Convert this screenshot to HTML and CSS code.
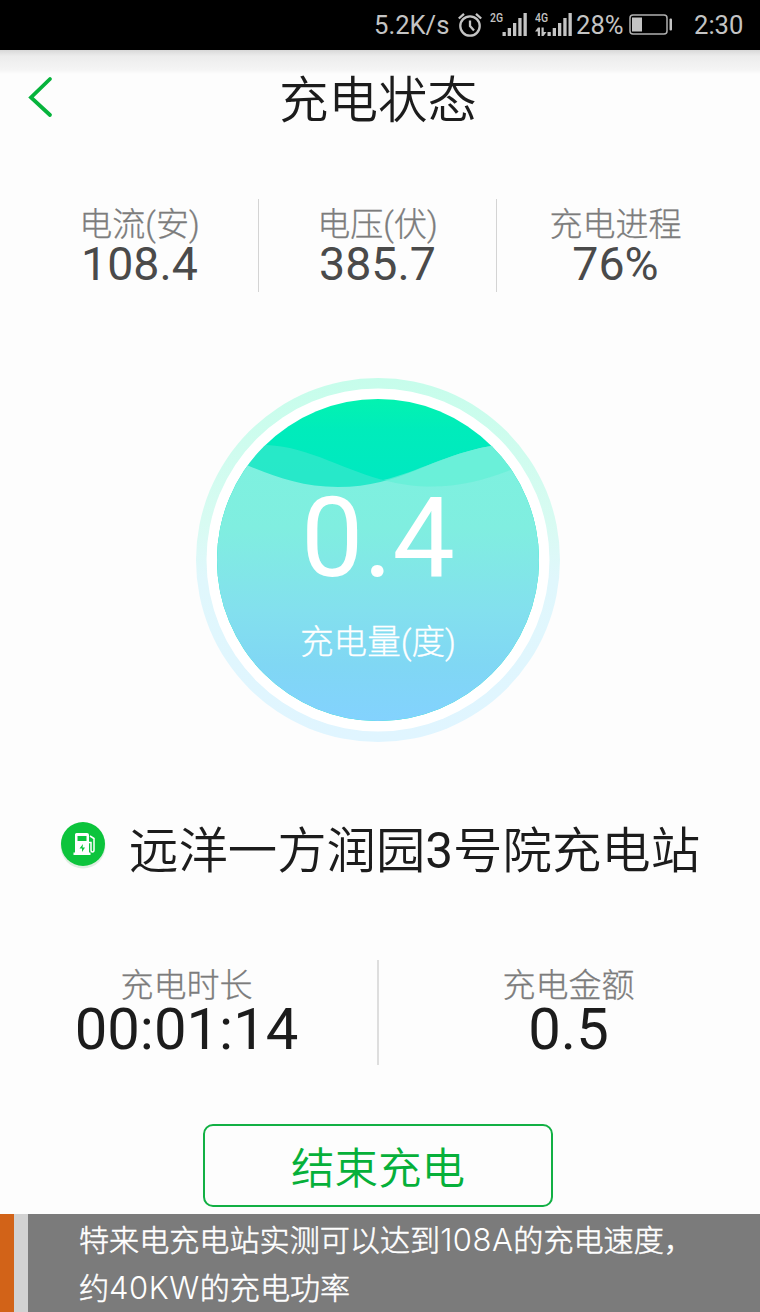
FILE: index.html
```html
<!DOCTYPE html>
<html lang="zh-CN">
<head>
  <meta charset="utf-8">
  <title>充电状态</title>
  <link rel="stylesheet" href="styles.css">
</head>
<body>
  <div class="status-bar">
    <span class="speed">5.2K/s</span>
    <svg class="alarm" width="24" height="26" viewBox="0 0 24 26" fill="none" stroke="#c4c4c4" stroke-width="2.300">
      <circle cx="12" cy="14" r="9.700"/>
      <path d="M12 8.500V14l4 4.500M.8 6.500L6 1.800M18 1.800L23.200 6.500"/>
    </svg>
    <svg class="signal" width="38" height="32" viewBox="0 -3 38 32" fill="#c4c4c4">
      <text class="net" x="0" y="10" textLength="13" lengthAdjust="spacingAndGlyphs">2G</text>
      <path d="M12.500 20h3.300v4h-3.300zM17.700 16H21v8h-3.300zM23 11h3.300v13H23zM28.300 6h3.300v18h-3.300zM33.500 1h3.300v23h-3.300z"/>
    </svg>
    <svg class="signal" width="38" height="32" viewBox="0 -3 38 32" fill="#c4c4c4">
      <text class="net" x="0" y="10" textLength="13" lengthAdjust="spacingAndGlyphs">4G</text>
      <path d="M0 19.500l3-4h2V24H2.800v-4.500zM6.500 15.500h2.200V20h2.800l-3 4h-2z"/>
      <path d="M12.500 20h3.300v4h-3.300zM17.700 16H21v8h-3.300zM23 11h3.300v13H23zM28.300 6h3.300v18h-3.300zM33.500 1h3.300v23h-3.300z"/>
    </svg>
    <span class="percent">28%</span>
    <svg class="battery" width="44" height="22" viewBox="0 0 44 22">
      <rect x="1" y="1" width="37" height="19" rx="3" fill="none" stroke="#b0b0b0" stroke-width="1.500"/>
      <rect x="3" y="3.500" width="10" height="14" fill="#c4c4c4"/>
      <rect x="40.500" y="4.500" width="2.500" height="12" rx="1" fill="#c4c4c4"/>
    </svg>
    <span class="clock">2:30</span>
  </div>

  <header class="header">
    <a class="back" href="#">
      <svg width="28" height="44" viewBox="0 0 28 44" fill="none" stroke="#06b33c" stroke-width="3.800" stroke-linecap="round">
        <path d="M24 4L5 22.500L24 40"/>
      </svg>
    </a>
    <h1>充电状态</h1>
  </header>

  <main>
    <div class="stats">
      <div class="stat">
        <div class="label">电流(安)</div>
        <div class="value">108.4</div>
      </div>
      <div class="stat">
        <div class="label">电压(伏)</div>
        <div class="value">385.7</div>
      </div>
      <div class="stat">
        <div class="label">充电进程</div>
        <div class="value">76%</div>
      </div>
    </div>

    <div class="gauge">
      <svg width="364" height="364" viewBox="0 0 364 364">
        <defs>
          <linearGradient id="ring" x1="0" y1="0" x2="0" y2="1">
            <stop offset="0" stop-color="#c6fdeb"/>
            <stop offset="0.400" stop-color="#d8fbf2"/>
            <stop offset="0.550" stop-color="#e0f7fc"/>
            <stop offset="1" stop-color="#e0f5ff"/>
          </linearGradient>
          <linearGradient id="top" gradientUnits="userSpaceOnUse" x1="0" y1="20" x2="0" y2="110">
            <stop offset="0" stop-color="#03f3b0"/>
            <stop offset="0.350" stop-color="#00ecbb"/>
            <stop offset="1" stop-color="#00e8c2"/>
          </linearGradient>
          <linearGradient id="water" gradientUnits="userSpaceOnUse" x1="0" y1="68" x2="0" y2="342">
            <stop offset="0" stop-color="#7df2df"/>
            <stop offset="0.300" stop-color="#80eee0"/>
            <stop offset="0.600" stop-color="#83e0ee"/>
            <stop offset="0.800" stop-color="#80d7f4"/>
            <stop offset="1" stop-color="#83d2fe"/>
          </linearGradient>
          <clipPath id="disc"><circle cx="182" cy="182" r="161"/></clipPath>
        </defs>
        <circle cx="182" cy="182" r="182" fill="url(#ring)"/>
        <circle cx="182" cy="182" r="171.500" fill="#fff"/>
        <g clip-path="url(#disc)">
          <rect width="364" height="364" fill="url(#top)"/>
          <!-- back wave, then front wave -->
          <path d="M0 62C30 64 50 66 71 67C115 69 150 94 192 103C235 113 275 107 320 92L364 80V364H0Z" fill="#4ee8d2" fill-opacity="0.500"/>
          <path d="M0 60C25 70 35 80 53 88C80 99 107 109 142 109C206 109 235 78 295 68C315 64 340 62 364 62V364H0Z" fill="url(#water)"/>
          <path d="M187 102C235 115 275 107 312 93L330 85V50L295 68C250 76 222 94 187 102Z" fill="#62f0d5" fill-opacity="0.700"/>
        </g>
      </svg>
      <div class="gauge-text">
        <div class="amount">0.4</div>
        <div class="unit">充电量(度)</div>
      </div>
    </div>

    <div class="station">
      <svg class="pump" width="54" height="54" viewBox="0 0 54 54">
        <circle cx="27" cy="28" r="22.500" fill="#dfeee2"/>
        <circle cx="27" cy="26" r="22" fill="#0cc43c"/>
        <path fill="#fff" fill-rule="evenodd" d="M20.500 15H31q2 0 2 2v17.500h1.500V37H17.500v-2.500H19V16.500Q19 15 20.500 15zM21.500 18v5h9v-5zM27 26l-3.500 4.500H26V34l3-4.500h-2.500z"/>
        <path d="M34 18l4 2.500V32q0 2-1.500 2T35 32v-7.500h-2" fill="none" stroke="#fff" stroke-width="1.500"/>
      </svg>
      <span class="station-name">远洋一方润园<span class="num">3</span>号院充电站</span>
    </div>

    <div class="totals">
      <div class="total">
        <div class="label">充电时长</div>
        <div class="value">00:01:14</div>
      </div>
      <div class="total">
        <div class="label">充电金额</div>
        <div class="value">0.5</div>
      </div>
    </div>

    <button class="stop">结束充电</button>
  </main>

  <footer class="caption">
    <p>特来电充电站实测可以达到<span class="latin">108A</span>的充电速度，<br>约<span class="latin">40KW</span>的充电功率</p>
  </footer>
</body>
</html>
```
FILE: styles.css
```css
* {
  box-sizing: border-box;
}

body {
  margin: 0;
  width: 760px;
  height: 1312px;
  overflow: hidden;
  display: flex;
  flex-direction: column;
  background-color: #fdfdfd;
  font-family: Roboto, "Noto Sans CJK SC", sans-serif;
  color: #1c1c1c;
}

.status-bar {
  display: flex;
  align-items: center;
  height: 50px;
  padding-left: 374px;
  background-color: #000;
  color: #c4c4c4;
  font-size: 25.600px;
  white-space: nowrap;
}

.speed {
  width: 84px;
}

.alarm {
  margin-right: 8px;
}

.signal {
  margin-right: 7px;
}

.net {
  font-size: 13.500px;
  font-weight: 500;
}

.percent {
  width: 53px;
  margin-left: -4px;
}

.clock {
  margin-left: 21px;
}

.header {
  display: flex;
  height: 96px;
  padding: 0 26px;
  background: linear-gradient(#d8d8d8, #ececec 6px, #f5f5f5 20px, #fdfdfd 24px);
}

.back {
  width: 28px;
  padding-top: 25px;
}

h1 {
  flex: 1;
  margin: 2px 32px 0 0;
  font-size: 49.500px;
  line-height: 98px;
  font-weight: 350;
  text-align: center;
}

main {
  display: flex;
  flex-direction: column;
  align-items: center;
  height: 1068px;
}

.stats {
  display: flex;
  width: 713px;
  height: 93px;
  margin: 53px 0 0 -5px;
  text-align: center;
}

.stat {
  flex: 1;
  border-right: 1px solid #d4d4d4;
}

.stat:last-child {
  border-right: 0;
}

.label {
  padding-top: 3px;
  font-size: 33px;
  line-height: 45px;
  font-weight: 300;
  color: #7c7c7c;
  -webkit-text-stroke: 0.3px;
}

.stat .value {
  font-size: 46.500px;
  line-height: 35px;
  color: #4a4a4a;
}

.gauge {
  display: grid;
  width: 364px;
  height: 364px;
  margin: 86px 0 0 -4px;
}

.gauge svg,
.gauge-text {
  grid-area: 1 / 1;
}

.gauge-text {
  z-index: 1;
  padding-top: 98px;
  color: #fff;
  text-align: center;
}

.amount {
  font-size: 111px;
  line-height: 124px;
}

.unit {
  margin-top: 19px;
  font-size: 33.600px;
  line-height: 48px;
  font-weight: 300;
  -webkit-text-stroke: 0.3px;
}

.station {
  display: flex;
  align-items: center;
  width: 760px;
  height: 60px;
  margin-top: 74px;
  padding-left: 56px;
}

.pump {
  margin-bottom: 2px;
}

.station-name {
  margin-left: 19px;
  font-size: 49.400px;
  font-weight: 350;
  white-space: nowrap;
}

.num {
  font-weight: 400;
}

.totals {
  display: flex;
  width: 760px;
  height: 105px;
  margin-top: 84px;
  text-align: center;
}

.total {
  width: 379px;
  padding-right: 4px;
  border-right: 2px solid #dedede;
}

.total:last-child {
  padding-right: 0;
  border-right: 0;
}

.total .value {
  font-size: 58px;
  line-height: 42px;
}

.stop {
  width: 350px;
  height: 83px;
  margin: 59px 0 0 -4px;
  border: 2px solid #12b044;
  border-radius: 10px;
  background: none;
  color: #06b03a;
  font-family: inherit;
  font-size: 43.500px;
  font-weight: 350;
}

.caption {
  flex: 1;
  padding-left: 79px;
  background: linear-gradient(90deg, #d26318 14px, #d2d2d2 14px, #d2d2d2 28px, #7b7b7b 28px);
  color: #fff;
  font-family: Inter, "Noto Sans CJK SC", sans-serif;
  font-size: 30.100px;
  font-weight: 300;
  line-height: 48px;
  -webkit-text-stroke: 0.5px;
}

.caption p {
  margin: 2px 0 0;
}

.latin {
  font-size: 31px;
  letter-spacing: 0.5px;
  -webkit-text-stroke: 0;
}
```
